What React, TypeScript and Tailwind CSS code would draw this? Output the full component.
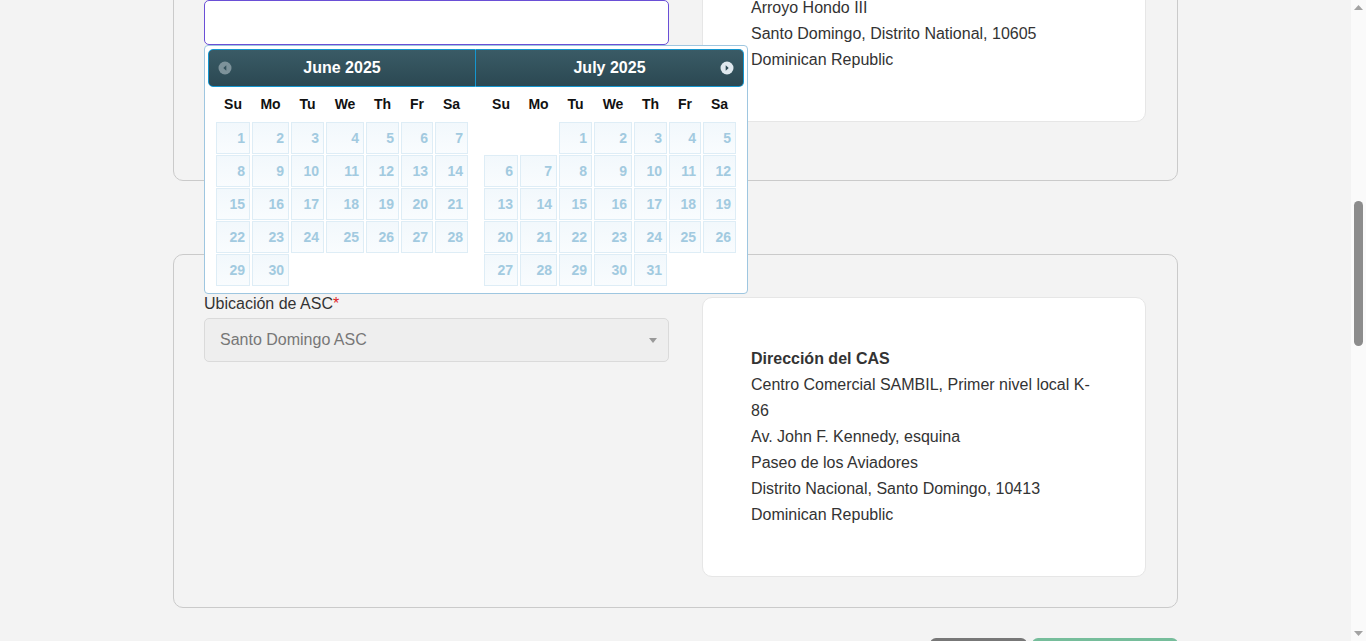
import React from 'react';

const FONT = { fontFamily: '"Liberation Sans", Arial, Helvetica, sans-serif' };

const COLS = 'grid grid-cols-[34px_37px_33px_38px_33px_32px_33px] gap-x-[2px]';
const DAYS = ['Su', 'Mo', 'Tu', 'We', 'Th', 'Fr', 'Sa'];

const PrevIcon: React.FC = () => (
  <svg width="14" height="14" viewBox="0 0 14 14">
    <circle cx="7" cy="7" r="6.5" fill="#7d929a" />
    <path d="M8.3 4.2 L5.3 7 L8.3 9.8 Z" fill="#34525c" />
  </svg>
);

const NextIcon: React.FC = () => (
  <svg width="14" height="14" viewBox="0 0 14 14">
    <circle cx="7" cy="7" r="6.5" fill="#dfe8ee" />
    <path d="M5.7 4.2 L8.7 7 L5.7 9.8 Z" fill="#2d4a55" />
  </svg>
);

const Month: React.FC<{ title: string; offset: number; days: number; side: 'left' | 'right' }> = ({
  title,
  offset,
  days,
  side,
}) => {
  const cells: (number | null)[] = [];
  for (let i = 0; i < offset; i++) cells.push(null);
  for (let d = 1; d <= days; d++) cells.push(d);

  return (
    <div className="w-[268px]">
      <div
        className={
          side === 'left'
            ? 'h-[38px] flex items-center px-[9px] border border-[#1596cf] rounded-l-[5px] bg-gradient-to-b from-[#3a5b66] to-[#2b4852]'
            : 'h-[38px] flex items-center px-[9px] border border-l-0 border-[#1596cf] rounded-r-[5px] bg-gradient-to-b from-[#3a5b66] to-[#2b4852]'
        }
      >
        <div className="w-[14px]">{side === 'left' && <PrevIcon />}</div>
        <div className="flex-1 text-center text-white font-bold text-[16px]">{title}</div>
        <div className="w-[14px]">{side === 'right' && <NextIcon />}</div>
      </div>
      <div className="pl-[8px]">
        <div className={`${COLS} h-[35px] items-center`}>
          {DAYS.map(d => (
            <div key={d} className="text-center text-[14px] font-bold text-[#111]">
              {d}
            </div>
          ))}
        </div>
        <div className={`${COLS} gap-y-[1px]`}>
          {cells.map((d, i) =>
            d === null ? (
              <div key={i} className="h-[32px]" />
            ) : (
              <div
                key={i}
                className="h-[32px] flex items-center justify-end pr-[4px] border border-[#deedf6] bg-gradient-to-b from-[#f2f8fc] to-[#f9fcfe] text-[14px] font-bold text-[#a2cae0]"
              >
                {d}
              </div>
            )
          )}
        </div>
      </div>
    </div>
  );
};

const DatePicker: React.FC = () => (
  <div className="absolute left-0 top-full z-10 w-[544px] h-[249px] bg-white border border-[#9ec6e0] rounded-[4px] p-[3px]">
    <div className="flex">
      <Month title="June 2025" offset={0} days={30} side="left" />
      <Month title="July 2025" offset={2} days={31} side="right" />
    </div>
  </div>
);

const AddressCard: React.FC<{ title: string; lines: string[] }> = ({ title, lines }) => (
  <div className="bg-white border border-[#e6e6e6] rounded-[10px] pt-[48px] pb-[48px] pl-[48px] pr-[48px] text-[16px] leading-[26px] text-[#333]">
    <div className="font-bold">{title}</div>
    {lines.map(l => (
      <div key={l}>{l}</div>
    ))}
  </div>
);

export default function App() {
  return (
    <div className="w-[1366px] h-[641px] overflow-hidden flex bg-[#f3f3f3]" style={FONT}>
      <div className="flex-1 overflow-hidden">
        <div className="w-[1005px] mx-auto mt-[-137px]">
          {/* Sección fecha */}
          <div className="border border-[#cacaca] rounded-[10px] pt-[30px] px-[30px] pb-[58px]">
            <div className="grid grid-cols-[465px_444px] gap-x-[33px] items-start">
              <div>
                <div className="text-[16px] leading-[21px] text-[#333]">
                  Tipo de servicio<span className="text-[#e02424]">*</span>
                </div>
                <div className="h-[44px] bg-white border border-[#d6d6d6] rounded-[5px] mb-[20px]" />
                <div className="text-[16px] leading-[21px] text-[#333]">
                  Fecha de la cita<span className="text-[#e02424]">*</span>
                </div>
                <div className="relative">
                  <div className="h-[45px] bg-white border border-[#6a4fd6] rounded-[5px]" />
                  <DatePicker />
                </div>
              </div>
              <AddressCard
                title="Dirección del ASC"
                lines={[
                  'Av. Luis Amiama Tió',
                  'Arroyo Hondo III',
                  'Santo Domingo, Distrito National, 10605',
                  'Dominican Republic',
                ]}
              />
            </div>
          </div>

          {/* Sección ubicación */}
          <div className="mt-[73px] border border-[#cacaca] rounded-[10px] pt-[42px] px-[30px] pb-[30px]">
            <div className="grid grid-cols-[465px_444px] gap-x-[33px] items-start">
              <div>
                <div className="text-[16px] leading-[14px] mb-[7px] text-[#333]">
                  Ubicación de ASC<span className="text-[#e02424]">*</span>
                </div>
                <div className="h-[44px] bg-[#eeeeee] border border-[#dadada] rounded-[5px] flex items-center pl-[15px] pr-[11px] text-[16px] text-[#777]">
                  <span className="flex-1">Santo Domingo ASC</span>
                  <svg width="8" height="5" viewBox="0 0 8 5">
                    <path d="M0 0 L8 0 L4 5 Z" fill="#999" />
                  </svg>
                </div>
              </div>
              <AddressCard
                title="Dirección del CAS"
                lines={[
                  'Centro Comercial SAMBIL, Primer nivel local K-86',
                  'Av. John F. Kennedy, esquina',
                  'Paseo de los Aviadores',
                  'Distrito Nacional, Santo Domingo, 10413',
                  'Dominican Republic',
                ]}
              />
            </div>
          </div>

          <div className="mt-[30px] flex justify-end gap-[5px]">
            <button className="w-[97px] h-[40px] rounded-[6px] bg-[#777777] text-white text-[16px]">Atrás</button>
            <button className="w-[146px] h-[40px] rounded-[6px] bg-[#76bd9b] text-white text-[16px]">Continuar</button>
          </div>
        </div>
      </div>

      {/* barra de desplazamiento */}
      <div className="w-[15px] h-full bg-[#fafafa] flex flex-col items-center">
        <svg className="mt-[5px]" width="9" height="5" viewBox="0 0 9 5">
          <path d="M0 5 L4.5 0 L9 5 Z" fill="#a3a3a3" />
        </svg>
        <div className="mt-[191px] w-[9px] h-[145px] rounded-full bg-[#8c8c8c]" />
        <div className="flex-1" />
        <svg className="mb-[5px]" width="9" height="5" viewBox="0 0 9 5">
          <path d="M0 0 L4.5 5 L9 0 Z" fill="#a3a3a3" />
        </svg>
      </div>
    </div>
  );
}
